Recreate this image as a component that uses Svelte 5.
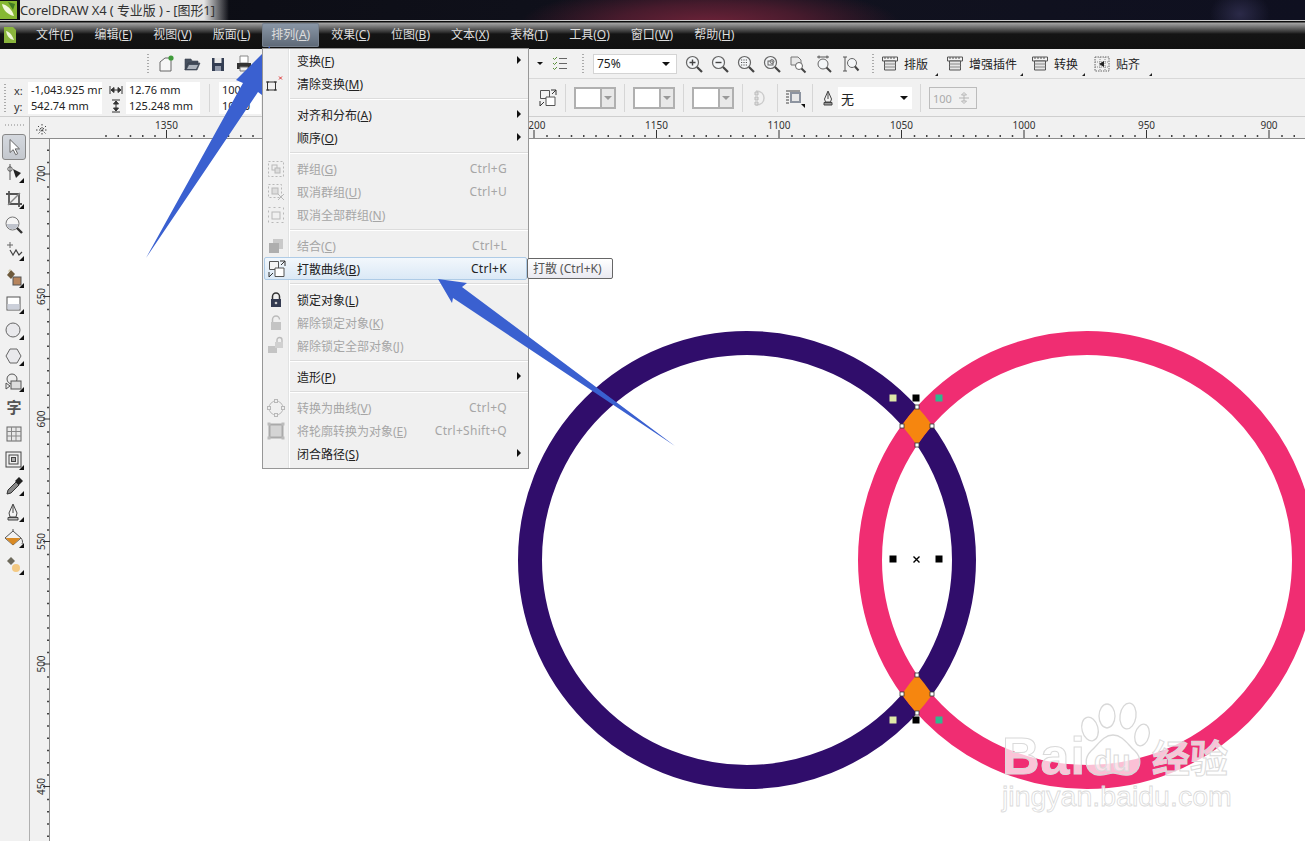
<script>
  const tri = '<polygon points="20,20 20,15 15,20" fill="#111"/>';
  const mag = (inner) => `<circle cx="8.5" cy="8.5" r="6" fill="#f4f6f8" stroke="#666" stroke-width="1.2"/><path d="M13 13l5 5" stroke="#444" stroke-width="2.2"/>${inner}`;

  const menus = [['文件','F'],['编辑','E'],['视图','V'],['版面','L'],['排列','A'],['效果','C'],['位图','B'],['文本','X'],['表格','T'],['工具','O'],['窗口','W'],['帮助','H']];

  const fileIcons = [
    '<path d="M4 17V8l5-4h6v13z" fill="#f6f6f6" stroke="#666"/><circle cx="15" cy="4" r="2.6" fill="#3f9b3a"/>',
    '<path d="M3 16V5h6l1 2h6v2H6l-3 7zM3 16l3-7h12l-3 7z" fill="#46505e" stroke="#39414d" stroke-width=".6"/><path d="M5 15l2-4h9l-2 4z" fill="#aeb4bd"/>',
    '<path d="M4 4h12v13H4z" fill="#333d52"/><path d="M6.5 4h7v5h-7z" fill="#e8e8e8"/><path d="M7 12h6v5H7z" fill="#8f97a8"/>',
    '<path d="M6 2h8v7H6z" fill="#fff" stroke="#888"/><path d="M3 9h14v6H3z" fill="#333"/><path d="M6 13h8v4H6z" fill="#eee" stroke="#777"/>'
  ];

  const zoomIcons = [
    mag('<path d="M5.5 8.5h6M8.5 5.5v6" stroke="#444" stroke-width="1.4"/>'),
    mag('<path d="M5.5 8.5h6" stroke="#444" stroke-width="1.4"/>'),
    mag('<path d="M5 6h7M5 8.5h7M5 11h7" stroke="#555" stroke-width="1.2" stroke-dasharray="1.2 1.2"/>'),
    mag('<rect x="6" y="7" width="5" height="4" fill="none" stroke="#666"/><circle cx="10" cy="7.5" r="2" fill="none" stroke="#777"/>'),
    '<path d="M3 3h7l3 3v5H3z" fill="#e8e8e8" stroke="#777"/><circle cx="11" cy="12" r="3.5" fill="#fff" stroke="#666"/><path d="M13.5 14.5l4 4" stroke="#444" stroke-width="2"/>',
    '<path d="M3 3h12M5 1.5v3M13 1.5v3" stroke="#555"/><circle cx="9" cy="10" r="5" fill="#f4f6f8" stroke="#666"/><path d="M12.5 13.5l4.5 4.5" stroke="#444" stroke-width="2"/>',
    '<path d="M3 3h4M3 17h4M5 3v14" stroke="#555"/><circle cx="12" cy="9" r="4.5" fill="#f4f6f8" stroke="#666"/><path d="M15 12.5l3.5 4" stroke="#444" stroke-width="2"/>'
  ];

  const comb = '<path d="M2.5 3h15v4h-15z" fill="#f2f2f2" stroke="#555"/><path d="M5 3v2M8 3v2M11 3v2M14 3v2" stroke="#555"/><path d="M4.5 7h11v9h-11z" fill="#e6e6e6" stroke="#555"/><path d="M4.5 10h11M4.5 13h11" stroke="#888"/>';
  const snap = '<path d="M3 3h14v14H3z" fill="none" stroke="#666" stroke-dasharray="1.5 1"/><path d="M3 8h14M3 13h14M8 3v14M13 3v14" stroke="#888" stroke-dasharray="1 1"/><path d="M12 7v6l-5-3z" fill="#222"/>';
  const textTools = [
    { label: '排版', icon: comb, width: 65 },
    { label: '增强插件', icon: comb, width: 85 },
    { label: '转换', icon: comb, width: 62 },
    { label: '贴齐', icon: snap, width: 67 }
  ];

  const breakIcon = '<path d="M2.5 2.5h9v8h-9z" fill="#f4f4f4" stroke="#555"/><path d="M8 9h9v8.5H8z" fill="#fff" stroke="#555"/><path d="M13 2h5v5M18 2l-4 4M2 18v-5M2 18l4-4" fill="none" stroke="#333"/>';

  const toolbox = [
    { icon: '<path d="M6 2.5v13l3.2-2.8 2.5 5 2-1-2.500-4.800h4.300z" fill="#fff" stroke="#666"/>', active: true },
    { icon: '<circle cx="6" cy="6" r="2.2" fill="#fff" stroke="#555"/><path d="M6 1v16" stroke="#555"/><path d="M9 6l8 4-5 5z" fill="#222"/>' + tri },
    { icon: '<path d="M5 2v13h13M2 5h13v13" fill="none" stroke="#555" stroke-width="1.8"/><path d="M4 16L16 4" stroke="#888" stroke-width="1.5"/>' + tri },
    { icon: '<circle cx="8.5" cy="8.5" r="6.5" fill="#f5f5f5" stroke="#777"/><path d="M3 9h11c0 3-2 5-5.5 5S3 12 3 9z" fill="#bfc3cc"/><path d="M13 13l5 5" stroke="#333" stroke-width="2.4"/>' },
    { icon: '<path d="M3 4h6M6 1v6" stroke="#666"/><path d="M6 9l3 5 3-5 3 5 3-3" fill="none" stroke="#444" stroke-width="1.2"/>' + tri },
    { icon: '<path d="M3 7l4-5 4 4-4 5z" fill="#6e5a3c"/><path d="M4 3l2-2 1 1-2 2z" fill="#cfc7a8"/><rect x="9" y="9" width="8" height="8" fill="#b6845c" stroke="#555"/>' + tri },
    { icon: '<rect x="3" y="3" width="13" height="13" fill="#fff" stroke="#555"/><path d="M3.5 10h12v5.5h-12z" fill="#ccd0da"/>' + tri },
    { icon: '<circle cx="9" cy="10" r="7" fill="#e9e9ec" stroke="#666"/>' + tri },
    { icon: '<path d="M6 3h7l4 7-4 7H6l-4-7z" fill="#e9e9ec" stroke="#666"/>' + tri },
    { icon: '<circle cx="8" cy="7" r="5" fill="#eee" stroke="#555"/><rect x="7" y="9" width="10" height="8" fill="#ddd" stroke="#555"/><path d="M2 11l4 3-4 3z" fill="#eee" stroke="#555"/>' + tri },
    { glyph: '字' },
    { icon: '<rect x="3" y="3" width="14" height="14" fill="#e8e8e8" stroke="#666"/><path d="M3 7.5h14M3 12h14M7.5 3v14M12 3v14" stroke="#888"/>' },
    { icon: '<rect x="2" y="2" width="15" height="15" fill="#f0f0f0" stroke="#444"/><rect x="5" y="5" width="9" height="9" fill="none" stroke="#444"/><rect x="7.5" y="7.5" width="4" height="4" fill="#aaa" stroke="#444"/>' + tri },
    { icon: '<path d="M3 18l1-4 8-8 3 3-8 8z" fill="#888" stroke="#333"/><path d="M11 5l4-4 4 4-4 4z" fill="#222"/>' + tri },
    { icon: '<path d="M9 2l4 9-1 4H6l-1-4z" fill="#f4f4f4" stroke="#444"/><path d="M9 3v8" stroke="#444"/><path d="M4 15.5h10V18H4z" fill="#bbb" stroke="#444"/>' + tri },
    { icon: '<path d="M1 10l8-7 8 7-8 7z" fill="#f2f2f2" stroke="#555"/><path d="M1.5 10h15l-7.5 7z" fill="#d98a24"/><path d="M9 3V1M17 10c1.5 2 2 4 1 6" stroke="#555" fill="none"/>' + tri },
    { icon: '<path d="M3 6l4-4 4 4-4 4z" fill="#6e6a5c"/><circle cx="12" cy="13" r="4" fill="#f4c982"/>' + tri }
  ];

  const lockIcon = '<path d="M6.5 9V6.5a3.500 3.500 0 0 1 7 0V9" fill="none" stroke="#333" stroke-width="1.5"/><rect x="5" y="9" width="10" height="8" fill="#333a50"/><circle cx="10" cy="13" r="1.3" fill="#ccc"/>';
  const unlockIcon = '<path d="M6.5 9V6.5a3.500 3.500 0 0 1 7 0" fill="none" stroke="#bbb" stroke-width="1.5"/><rect x="5" y="9" width="10" height="8" fill="#c4c4c4"/>';
  const g = '#b8b8b8';

  // null = separator
  const menuRows = [
    { label: '变换', key: 'F', arrow: true },
    { label: '清除变换', key: 'M', icon: '<rect x="1.5" y="8" width="8" height="8" fill="none" stroke="#333"/><path d="M0 8h3M0 16h3M8 8h3M8 16h3" stroke="#333"/><path d="M13 2.5l3 3M16 2.5l-3 3" stroke="#d33"/>' },
    null,
    { label: '对齐和分布', key: 'A', arrow: true },
    { label: '顺序', key: 'O', arrow: true },
    null,
    { label: '群组', key: 'G', shortcut: 'Ctrl+G', off: true, icon: `<rect x="2.5" y="2.5" width="15" height="15" fill="none" stroke="${g}" stroke-dasharray="2 2"/><rect x="6" y="6" width="5" height="5" fill="none" stroke="${g}"/><rect x="9" y="9" width="5" height="5" fill="#ddd" stroke="${g}"/>` },
    { label: '取消群组', key: 'U', shortcut: 'Ctrl+U', off: true, icon: `<rect x="2.5" y="2.5" width="13" height="13" fill="none" stroke="${g}" stroke-dasharray="2 2"/><rect x="6" y="6" width="6" height="6" fill="#ddd" stroke="${g}"/><path d="M12 12l6 6M18 12l-6 6" stroke="${g}"/>` },
    { label: '取消全部群组', key: 'N', off: true, icon: `<rect x="2.5" y="2.5" width="15" height="15" fill="none" stroke="${g}" stroke-dasharray="2 3"/><rect x="6" y="7" width="8" height="7" fill="none" stroke="${g}"/>` },
    null,
    { label: '结合', key: 'C', shortcut: 'Ctrl+L', off: true, icon: `<rect x="7" y="3" width="10" height="10" fill="#c9c9c9"/><rect x="3" y="7" width="10" height="10" fill="#aeaeae"/>` },
    { label: '打散曲线', key: 'B', shortcut: 'Ctrl+K', hot: true, icon: breakIcon },
    null,
    { label: '锁定对象', key: 'L', icon: lockIcon },
    { label: '解除锁定对象', key: 'K', off: true, icon: unlockIcon },
    { label: '解除锁定全部对象', key: 'J', off: true, icon: `<rect x="2" y="10" width="9" height="7" fill="#c4c4c4"/><rect x="9" y="6" width="8" height="6" fill="#d0d0d0"/><path d="M11 6V4a2.5 2.5 0 0 1 5 0v2" fill="none" stroke="#bbb" stroke-width="1.4"/>` },
    null,
    { label: '造形', key: 'P', arrow: true },
    null,
    { label: '转换为曲线', key: 'V', shortcut: 'Ctrl+Q', off: true, icon: `<circle cx="10" cy="10" r="7" fill="none" stroke="${g}"/><rect x="8.5" y="1.5" width="3" height="3" fill="#eee" stroke="${g}"/><rect x="8.5" y="15.5" width="3" height="3" fill="#eee" stroke="${g}"/><rect x="1.5" y="8.5" width="3" height="3" fill="#eee" stroke="${g}"/><rect x="15.5" y="8.5" width="3" height="3" fill="#eee" stroke="${g}"/>` },
    { label: '将轮廓转换为对象', key: 'E', shortcut: 'Ctrl+Shift+Q', off: true, icon: `<rect x="3.5" y="3.5" width="13" height="13" fill="#d4d4d4" stroke="#aaa" stroke-width="2"/><rect x="1.5" y="1.5" width="3" height="3" fill="#bbb"/><rect x="15.5" y="1.5" width="3" height="3" fill="#bbb"/><rect x="1.5" y="15.5" width="3" height="3" fill="#bbb"/><rect x="15.5" y="15.5" width="3" height="3" fill="#bbb"/>` },
    { label: '闭合路径', key: 'S', arrow: true }
  ];

  // rulers: 50 units = 122.5px, one tick every 5 units
  const hx = (v) => 534 + (1200 - v) * 2.45;
  const vy = (v) => 174 + (700 - v) * 2.45;
  const hTicks = [];
  for (let v = 1375; v >= 880; v -= 5) hTicks.push({ x: hx(v), major: v % 50 === 0, v });
  const vTicks = [];
  for (let v = 725; v >= 420; v -= 5) vTicks.push({ y: vy(v), major: v % 50 === 0, v });

  const handles = [[916, 398], [893, 559], [939, 559], [916, 720]];
  const nodes = [[917, 407], [932, 426], [917, 445], [902, 426], [917, 675], [932, 694], [917, 713], [902, 694]];
  const diamond = (cy) => `M917 ${cy - 153.4}A229 229 0 0 1 932.3 ${cy - 134.6}A205 205 0 0 0 917 ${cy - 114.6}A205 205 0 0 0 901.7 ${cy - 134.6}A229 229 0 0 1 917 ${cy - 153.4}Z`;
  const diamondBottom = `M917 ${560 + 114.6}A205 205 0 0 1 932.3 ${560 + 134.6}A229 229 0 0 1 917 ${560 + 153.4}A229 229 0 0 1 901.7 ${560 + 134.6}A205 205 0 0 1 917 ${560 + 114.6}Z`;
</script>

<div class="app">
  <div class="titlebar">
    <svg class="logo" width="17" height="18" viewBox="0 0 17 18">
      <rect width="17" height="18" fill="#86b832"/>
      <path d="M2 3c5 1 10 5 12 12C8 14 3 9 2 3z" fill="#f2f8dc"/>
      <path d="M8 1l7 2-2 6z" fill="#3f7a22"/>
    </svg>
    <span class="title">CorelDRAW X4 ( 专业版 ) - [图形1]</span>
  </div>

  <div class="menubar">
    <svg class="appicon" width="12" height="16" viewBox="0 0 12 16">
      <path d="M0 0h9l3 3v13H0z" fill="#8ab53c"/><path d="M2 4c4 1 6 4 8 9-5-1-7-4-8-9z" fill="#eef6d8"/>
    </svg>
    <div class="menuitems">
      {#each menus as [label, key]}
        <span class="menuitem" class:open={key === 'A'}>{label}(<u>{key}</u>)</span>
      {/each}
    </div>
  </div>

  <div class="toolbar">
    <span class="grip first"></span>
    <div class="iconrow files">
      {#each fileIcons as icon}
        <svg class="ico" viewBox="0 0 20 20">{@html icon}</svg>
      {/each}
    </div>
    <span class="caret small"></span>
    <svg class="ico" viewBox="0 0 20 20">
      <path d="M3 4l1.5 1.5L7 3M3 9l1.500 1.500L7 8M3 14l1.500 1.500L7 13" fill="none" stroke="#5b8f3a"/>
      <path d="M9 4.500h8M9 9.500h8M9 14.500h8" stroke="#666"/>
    </svg>
    <span class="grip"></span>
    <div class="combo zoomcombo"><span>75%</span><i class="caret"></i></div>
    <div class="iconrow">
      {#each zoomIcons as icon}
        <svg class="ico" viewBox="0 0 20 20">{@html icon}</svg>
      {/each}
    </div>
    <span class="grip"></span>
    <div class="texttools">
      {#each textTools as tool}
        <div class="texttool" style="width:{tool.width}px">
          <svg width="20" height="20" viewBox="0 0 20 20">{@html tool.icon}</svg>
          <span>{tool.label}</span>
          <i class="corner"></i>
        </div>
      {/each}
    </div>
  </div>

  <div class="propbar">
    <div class="propleft">
      <span class="grip tall"></span>
      <div class="coords">
        <div class="coordrow"><label>x:</label><span class="field wide">-1,043.925 mm</span></div>
        <div class="coordrow"><label>y:</label><span class="field wide">542.74 mm</span></div>
      </div>
      <div class="coords sizes">
        <div class="coordrow">
          <svg width="14" height="14" viewBox="0 0 14 14"><path d="M1 3v8M13 3v8M2 7h10M2 7l3-2.500v5zM12 7L9 4.500v5z" stroke="#333" fill="#333"/></svg>
          <span class="field wide">12.76 mm</span>
        </div>
        <div class="coordrow">
          <svg width="14" height="14" viewBox="0 0 14 14"><path d="M3 1h8M3 13h8M7 2v10M7 2L4.500 5h5zM7 12L4.500 9h5z" stroke="#333" fill="#333"/></svg>
          <span class="field wide">125.248 mm</span>
        </div>
      </div>
      <span class="sep"></span>
      <div class="coords">
        <span class="field short">100</span>
        <span class="field short">100.0</span>
      </div>
    </div>
    <div class="propright">
      <svg class="ico" viewBox="0 0 20 20">{@html breakIcon}</svg>
      <span class="sep"></span>
      <div class="swatch"><b></b><i><em class="caret grey"></em></i></div>
      <span class="sep"></span>
      <div class="swatch"><b></b><i><em class="caret grey"></em></i></div>
      <span class="sep"></span>
      <div class="swatch"><b></b><i><em class="caret grey"></em></i></div>
      <span class="sep"></span>
      <svg class="ico" viewBox="0 0 20 20"><path d="M6 3c5 0 8 3 8 7s-3 7-8 7" fill="none" stroke="#ccc" stroke-width="1.5"/><path d="M5 4h3v3H5zM5 9h3v3H5zM5 14h3v3H5z" fill="#ddd" stroke="#bbb"/></svg>
      <span class="sep"></span>
      <svg class="ico" viewBox="0 0 20 20"><rect x="5" y="4" width="11" height="11" fill="#8d94a0"/><rect x="7" y="6" width="7" height="7" fill="#e8e8e8"/><path d="M1 3h14M1 6h3M1 9h3M1 12h3M1 15h3" stroke="#444"/><path d="M20 20v-4h-4z" fill="#111"/></svg>
      <span class="sep"></span>
      <svg class="pen" width="14" height="16" viewBox="0 0 14 16"><path d="M7 1l3.500 8-1 3h-5l-1-3z" fill="#f4f4f4" stroke="#444"/><path d="M7 2v7" stroke="#444"/><path d="M3 12.500h8V15H3z" fill="#999" stroke="#444"/></svg>
      <div class="combo outline"><span>无</span><i class="caret"></i></div>
      <span class="sep"></span>
      <div class="spin"><span>100</span><svg width="12" height="14" viewBox="0 0 12 14"><path d="M1 7h10M6 4v6M3.500 4h5L6 1.500zM3.500 10h5L6 12.500z" stroke="#b5b5b5" fill="none"/></svg></div>
    </div>
  </div>

  <div class="workspace">
    <div class="toolbox">
      <span class="hgrip"></span>
      {#each toolbox as tool}
        <div class="boxtool" class:active={tool.active}>
          {#if tool.glyph}
            <span class="glyph">{tool.glyph}</span>
          {:else}
            <svg width="20" height="20" viewBox="0 0 20 20">{@html tool.icon}</svg>
          {/if}
        </div>
      {/each}
    </div>
    <div class="rulers">
      <div class="rulertop">
        <div class="corner-box">
          <svg width="14" height="14" viewBox="0 0 14 14"><path d="M7 1v12M1 7h12M3 3l8 8M11 3l-8 8" stroke="#444" stroke-dasharray="1.500 1.500"/></svg>
        </div>
        <svg class="hruler" viewBox="50 117 1255 22" width="1255" height="22">
          {#each hTicks as t}
            {#if t.major}
              <line x1={t.x} x2={t.x} y1="130" y2="138" stroke="#333"/>
              <text x={t.x} y="129" text-anchor="middle" class="rulertext">{t.v}</text>
            {:else}
              <rect x={t.x} y="135" width="1.5" height="2" fill="#444"/>
            {/if}
          {/each}
        </svg>
      </div>
      <div class="rulerbody">
        <svg class="vruler" viewBox="30 139 20 702" width="20" height="702">
          {#each vTicks as t}
            {#if t.major}
              <line x1="43" x2="50" y1={t.y} y2={t.y} stroke="#333"/>
              <text transform="translate(45 {t.y}) rotate(-90)" text-anchor="middle" class="rulertext">{t.v}</text>
            {:else}
              <rect x="47" y={t.y} width="2" height="1.5" fill="#444"/>
            {/if}
          {/each}
        </svg>
        <svg class="canvas" viewBox="50 139 1255 702" width="1255" height="702">
          <circle cx="747" cy="560" r="217" fill="none" stroke="#300d6b" stroke-width="24"/>
          <circle cx="1087" cy="560" r="217" fill="none" stroke="#f02d72" stroke-width="24"/>
          <path d={diamond(560)} fill="#f6860f"/>
          <path d={diamondBottom} fill="#f6860f"/>
          {#each nodes as [x, y]}
            <rect x={x - 2} y={y - 2} width="4" height="4" fill="#fff" stroke="#333" stroke-width=".8"/>
          {/each}
          {#each handles as [x, y]}
            <rect x={x - 3.5} y={y - 3.5} width="7" height="7" fill="#000"/>
          {/each}
          <rect x="889.5" y="394.5" width="7" height="7" fill="#dfe9a8"/>
          <rect x="889.5" y="716.5" width="7" height="7" fill="#dfe9a8"/>
          <rect x="935.5" y="394.5" width="7" height="7" fill="#2fb98f"/>
          <rect x="935.5" y="716.5" width="7" height="7" fill="#2fb98f"/>
          <path d="M913.5 556.5l6 6M919.5 556.5l-6 6" stroke="#000" stroke-width="1.4"/>

          <g class="watermark">
            <g fill="none" stroke="#d8d8d8" stroke-width="1.3">
              <ellipse cx="1090" cy="729" rx="8" ry="12" transform="rotate(-15 1090 729)"/>
              <ellipse cx="1107" cy="716" rx="8" ry="12"/>
              <ellipse cx="1128" cy="716" rx="8" ry="13" transform="rotate(8 1128 716)"/>
              <ellipse cx="1142" cy="735" rx="7" ry="11" transform="rotate(15 1142 735)"/>
            </g>
            <path d="M1113 735c10 0 15 10 22 16 8 8 6 22-7 24-6 1-10-2-15-2s-9 3-15 2c-13-2-15-16-7-24 7-6 12-16 22-16z" fill="rgba(255,255,255,.7)" stroke="#d8d8d8" stroke-width="1.3"/>
            <text x="1002" y="774" class="wm-big">Bai</text>
            <text x="1094" y="771" class="wm-du">du</text>
            <text x="1152" y="772" class="wm-cn">经验</text>
            <text x="1002" y="806" class="wm-url">jingyan.baidu.com</text>
          </g>
        </svg>
      </div>
    </div>
  </div>

  <svg class="arrow under" viewBox="0 0 1305 841" width="1305" height="841">
    <path d="M146 258L243 83 236 80 270 46 266 98 258 92Z" fill="#3a60d0"/>
  </svg>

  <div class="dropdown">
    {#each menuRows as row}
      {#if row === null}
        <div class="menusep"></div>
      {:else}
        <div class="menurow" class:off={row.off} class:hot={row.hot}>
          <span class="rowicon">
            {#if row.icon}
              <svg width="20" height="20" viewBox="0 0 20 20">{@html row.icon}</svg>
            {/if}
          </span>
          <span class="rowlabel">{row.label}(<u>{row.key}</u>)</span>
          {#if row.shortcut}<span class="shortcut">{row.shortcut}</span>{/if}
          {#if row.arrow}<i class="subarrow"></i>{/if}
        </div>
      {/if}
    {/each}
  </div>

  <div class="tooltip">打散 (Ctrl+K)</div>

  <svg class="arrow" viewBox="0 0 1305 841" width="1305" height="841">
    <path d="M675 446L453 298 452 303 438 279 467 283 462 287Z" fill="#3a60d0"/>
  </svg>
</div>

<style>
  :global(body) {
    margin: 0;
    background: #fff;
  }

  .app {
    position: relative;
    width: 1305px;
    height: 841px;
    overflow: hidden;
    display: flex;
    flex-direction: column;
    font-family: "Noto Sans", "Noto Sans CJK SC", sans-serif;
    font-size: 12px;
    color: #222;
  }

  .titlebar {
    height: 20px;
    display: flex;
    align-items: center;
    gap: 3px;
    background:
      radial-gradient(ellipse 190px 40px at 710px 24px, #6e2339 0%, rgba(90, 30, 50, 0.75) 50%, rgba(40, 15, 30, 0) 100%),
      radial-gradient(ellipse 30px 24px at 1240px 14px, #2b2a48 0%, rgba(30, 30, 50, 0) 100%),
      linear-gradient(90deg, #0b0c12 0%, #11121e 60%, #0f1020 100%);
  }

  .logo {
    flex: none;
  }

  .title {
    font-size: 13px;
    letter-spacing: -0.1px;
    line-height: 20px;
    padding-right: 14px;
    color: #333;
    background: linear-gradient(90deg, #e8e8e8 0%, #e4e4e4 88%, rgba(220, 220, 220, 0) 100%);
    white-space: nowrap;
  }

  .menubar {
    height: 29px;
    display: flex;
    align-items: flex-end;
    box-sizing: border-box;
    border-top: 1px solid #c8c8c8;
    background: linear-gradient(180deg, #0c0c0c 0, #0c0c0c 1px, #a4a4a4 2px, #333 11px, #141414 13px, #111 100%);
    position: relative;
  }

  .appicon {
    position: absolute;
    left: 4px;
    top: 6px;
  }

  .menuitems {
    display: flex;
    gap: 3px;
    margin-left: 27px;
    height: 24px;
    margin-bottom: 2px;
  }

  .menuitem {
    padding: 0 9px;
    line-height: 24px;
    color: #ddd;
    white-space: nowrap;
    border-radius: 2px;
  }

  .menuitem.open {
    background: linear-gradient(180deg, #8b98a8, #5d6876);
    box-shadow: inset 0 0 0 1px #77818e;
  }

  .toolbar {
    height: 30px;
    box-sizing: border-box;
    display: flex;
    align-items: center;
    background: #f1f1f1;
    border-bottom: 1px solid #d8d8d8;
  }

  .grip {
    flex: none;
    width: 2px;
    height: 20px;
    margin: 0 9px;
    background-image: linear-gradient(#aaa 50%, transparent 50%);
    background-size: 2px 3px;
  }

  .grip.first {
    margin: 0 4px 0 147px;
  }

  .grip.tall {
    height: 28px;
    margin: 0 8px 0 4px;
  }

  .iconrow {
    display: flex;
  }

  .iconrow.files {
    margin-right: 276px;
  }

  .ico {
    flex: none;
    width: 20px;
    height: 20px;
    padding: 0 3px;
  }

  .caret {
    display: inline-block;
    width: 0;
    height: 0;
    border-left: 4px solid transparent;
    border-right: 4px solid transparent;
    border-top: 4px solid #111;
  }

  .caret.small {
    border-width: 3px 3px 0;
    margin: 0 4px;
  }

  .caret.grey {
    border-top-color: #999;
  }

  .combo {
    display: flex;
    align-items: center;
    justify-content: space-between;
    box-sizing: border-box;
    background: #fff;
    padding: 0 6px 0 3px;
  }

  .zoomcombo {
    width: 84px;
    height: 20px;
    margin-right: 4px;
    border: 1px solid #d4d4d4;
  }

  .texttools {
    display: flex;
    margin-left: -3px;
  }

  .texttool {
    position: relative;
    display: flex;
    align-items: center;
    gap: 4px;
    height: 24px;
    white-space: nowrap;
    color: #222;
  }

  .corner {
    position: absolute;
    right: 7px;
    bottom: 0;
    border-left: 3px solid transparent;
    border-bottom: 3px solid #222;
  }

  .propbar {
    height: 38px;
    box-sizing: border-box;
    padding-top: 1px;
    display: flex;
    align-items: center;
    background: #f1f1f1;
    border-bottom: 1px solid #cfcfcf;
  }

  .propleft {
    width: 535px;
    flex: none;
    display: flex;
    align-items: center;
  }

  .propright {
    display: flex;
    align-items: center;
  }

  .propright .sep {
    margin: 0 8px;
  }

  .propright .ico {
    margin: 0 -4px;
  }

  .propright .ico:first-child {
    margin-left: 0;
  }

  .coords {
    display: flex;
    flex-direction: column;
  }

  .coordrow {
    display: flex;
    align-items: center;
    gap: 3px;
    height: 16px;
  }

  .coordrow label {
    width: 11px;
    font-size: 11px;
    color: #333;
  }

  .sizes {
    margin-left: 7px;
  }

  .field {
    display: block;
    box-sizing: border-box;
    height: 16px;
    line-height: 16px;
    background: #fff;
    font-size: 11px;
    padding-left: 3px;
    overflow: hidden;
    white-space: nowrap;
  }

  .field.wide {
    width: 74px;
  }

  .field.short {
    width: 42px;
  }

  .sep {
    flex: none;
    width: 1px;
    height: 28px;
    margin: 0 9px;
    background: #d6d6d6;
  }

  .swatch {
    width: 42px;
    height: 22px;
    box-sizing: border-box;
    border: 2px solid #b0b0b0;
    display: flex;
    background: #e8e8e8;
  }

  .swatch b {
    width: 24px;
    background: #fff;
    border-right: 2px solid #b0b0b0;
  }

  .swatch i {
    flex: 1;
    display: flex;
    align-items: center;
    justify-content: center;
  }

  .pen {
    margin-right: 3px;
  }

  .outline {
    width: 74px;
    height: 22px;
    font-size: 13px;
    padding-right: 4px;
  }

  .spin {
    width: 48px;
    height: 22px;
    box-sizing: border-box;
    border: 1px solid #bcbcbc;
    color: #aaa;
    display: flex;
    align-items: center;
    justify-content: space-between;
    padding: 0 6px 0 3px;
    font-size: 11px;
  }

  .workspace {
    flex: 1;
    display: flex;
    min-height: 0;
  }

  .toolbox {
    width: 30px;
    flex: none;
    box-sizing: border-box;
    background: #f1f1f1;
    border-right: 1px solid #b0b0b0;
    display: flex;
    flex-direction: column;
    align-items: center;
    padding-top: 7px;
  }

  .hgrip {
    width: 20px;
    height: 2px;
    margin-bottom: 8px;
    background-image: linear-gradient(90deg, #bbb 50%, transparent 50%);
    background-size: 3px 2px;
  }

  .boxtool {
    flex: none;
    width: 24px;
    height: 26.1px;
    box-sizing: border-box;
    display: flex;
    align-items: center;
    justify-content: center;
    margin-right: 1px;
  }

  .boxtool.active {
    border: 1px solid #888;
    border-radius: 3px;
    background: linear-gradient(180deg, #d4d8de, #c4c8ce);
  }

  .glyph {
    font-size: 15px;
    font-weight: 700;
    color: #555;
    line-height: 1;
  }

  .rulers {
    flex: 1;
    display: flex;
    flex-direction: column;
    min-width: 0;
  }

  .rulertop {
    height: 22px;
    display: flex;
    background: #f1f1f1;
    box-shadow: inset 0 -1px 0 #8c8c8c;
  }

  .corner-box {
    width: 20px;
    height: 22px;
    flex: none;
    display: flex;
    justify-content: center;
    padding: 6px 0 0 3px;
    box-sizing: border-box;
  }

  .hruler,
  .vruler,
  .canvas {
    display: block;
    flex: none;
  }

  .rulerbody {
    flex: 1;
    display: flex;
    min-height: 0;
  }

  .vruler {
    background: #f1f1f1;
    box-shadow: inset -1px 0 0 #8c8c8c;
  }

  .canvas {
    background: #fff;
  }

  .rulertext {
    font-family: "Noto Sans", sans-serif;
    font-size: 10px;
    fill: #333;
  }

  .wm-big,
  .wm-du,
  .wm-cn,
  .wm-url {
    font-family: "Liberation Sans", "Noto Sans CJK SC", sans-serif;
    fill: rgba(255, 255, 255, 0.72);
    stroke: #dadada;
    stroke-width: 1;
  }

  .wm-big {
    font-size: 52px;
    font-weight: 700;
    letter-spacing: 1px;
  }

  .wm-du {
    font-size: 30px;
    font-weight: 700;
    fill: rgba(255, 255, 255, 0.5);
  }

  .wm-cn {
    font-size: 38px;
    font-weight: 700;
  }

  .wm-url {
    font-size: 28.5px;
    fill: rgba(255, 255, 255, 0.8);
    stroke-width: 0.8;
  }

  .arrow {
    position: absolute;
    left: 0;
    top: 0;
    pointer-events: none;
  }

  .dropdown {
    position: absolute;
    left: 262px;
    top: 48px;
    width: 267px;
    box-sizing: border-box;
    background:
      linear-gradient(90deg, #f0f0f0 25px, #e2e3e3 25px, #e2e3e3 26px, #fff 26px, #fff 27px, #f0f0f0 27px);
    border: 1px solid #979797;
    padding: 0 0 3px;
  }

  .menurow {
    position: relative;
    display: flex;
    align-items: center;
    height: 23px;
    white-space: nowrap;
  }

  .menurow.off {
    color: #a6a6a6;
  }

  .menurow.hot {
    margin: 0 1px;
    box-sizing: border-box;
    border: 1px solid #aecbe6;
    border-radius: 2px;
    background: linear-gradient(180deg, #f2f7fc, #dbe9f6);
  }

  .rowicon {
    width: 25px;
    flex: none;
    display: flex;
    justify-content: center;
  }

  .hot .rowicon {
    width: 23px;
  }

  .rowicon svg {
    display: block;
  }

  .rowlabel {
    margin-left: 9px;
  }

  .shortcut {
    position: absolute;
    right: 21px;
    letter-spacing: 0.3px;
  }

  .hot .shortcut {
    right: 19px;
  }

  .subarrow {
    position: absolute;
    right: 7px;
    top: 7px;
    border-top: 4px solid transparent;
    border-bottom: 4px solid transparent;
    border-left: 4px solid #111;
  }

  .menusep {
    height: 8px;
    margin-left: 27px;
    position: relative;
  }

  .menusep::after {
    content: "";
    position: absolute;
    left: 0;
    right: 0;
    top: 3px;
    height: 1px;
    background: #dcdcdc;
    box-shadow: 0 1px 0 #fff;
  }

  .tooltip {
    position: absolute;
    left: 527px;
    top: 258px;
    box-sizing: border-box;
    width: 86px;
    height: 21px;
    line-height: 19px;
    padding-left: 5px;
    background: linear-gradient(180deg, #fff, #e9e9f0);
    border: 1px solid #666;
    border-radius: 2px;
    color: #555;
    white-space: nowrap;
  }
</style>
